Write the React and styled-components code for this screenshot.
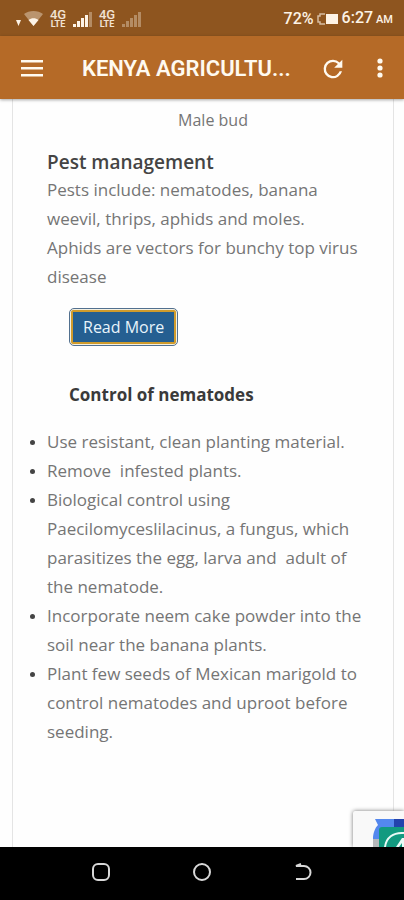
import React from "react";
import styled, { createGlobalStyle } from "styled-components";

const GlobalStyle = createGlobalStyle`
  * {
    box-sizing: border-box;
  }
  body {
    margin: 0;
    background: #fefefe;
    font-family: "Open Sans", "Noto Sans", sans-serif;
  }
`;

const Screen = styled.div`
  display: flex;
  flex-direction: column;
  min-height: 100vh;
`;

const StatusBar = styled.div`
  display: flex;
  align-items: center;
  justify-content: space-between;
  height: 36px;
  padding: 2px 11px 0 15px;
  background: #8e551f;
  color: #fdf3e6;
  font-family: Roboto, sans-serif;
`;

const StatusGroup = styled.div`
  display: flex;
  align-items: center;
  gap: ${(props) => props.$gap};
`;

const NetworkType = styled.span`
  display: flex;
  flex-direction: column;
  align-items: center;
  width: 18px;
  font-size: 13px;
  line-height: 11px;
  font-weight: 500;
  opacity: 0.9;
`;

const NetworkSub = styled.span`
  font-size: 9px;
  line-height: 9px;
  font-weight: 700;
`;

const StatusText = styled.span`
  font-size: ${(props) => (props.$small ? "11px" : "16px")};
  font-weight: 500;
  line-height: 20px;
`;

const Clock = styled.span`
  display: flex;
  align-items: baseline;
  gap: 3px;
`;

const AppBar = styled.header`
  display: flex;
  align-items: center;
  height: 63px;
  padding: 2px 12px 0 20px;
  background: #b56a27;
  color: #fffaf0;
  box-shadow: 0 1px 3px rgba(0, 0, 0, 0.35);
  z-index: 1;
`;

const AppActions = styled.div`
  display: flex;
  gap: 23px;
`;

const IconButton = styled.button`
  display: flex;
  align-items: center;
  justify-content: center;
  flex: none;
  width: 24px;
  height: 32px;
  padding: 0;
  border: none;
  background: none;
  color: inherit;

  svg {
    flex: none;
  }
`;

const AppTitle = styled.h1`
  flex: 1;
  min-width: 0;
  margin: 0 24px 0 38px;
  overflow: hidden;
  white-space: nowrap;
  text-overflow: ellipsis;
  font-family: Roboto, sans-serif;
  font-size: 22px;
  line-height: 34px;
  font-weight: 600;
`;

const Content = styled.main`
  display: flex;
  flex: 1;
  position: relative;
  padding: 0 10px 0 12px;
  overflow: hidden;
`;

const Article = styled.article`
  flex: 1;
  padding: 7px 30px 0 34px;
  border: solid #e4e4e4;
  border-width: 0 1px;
  color: #757575;
  font-size: 17px;
  line-height: 29px;
`;

const Caption = styled.p`
  margin: 0 0 15px;
  padding-left: 16px;
  font-size: 16px;
  text-align: center;
`;

const Heading = styled.h2`
  margin: 0;
  color: #444;
  font-size: 19px;
  line-height: 25px;
  font-weight: 600;
`;

const Paragraph = styled.p`
  margin: 0;
`;

const Indented = styled.div`
  padding-left: 22px;
`;

const ReadMore = styled.a`
  display: block;
  width: fit-content;
  margin: 17px 0 34px;
  padding: 1px;
  border: 1px solid #52708f;
  border-radius: 5px;
  background: #f4f1e4;
  color: #e8f4fb;
  font-size: 16px;
  text-decoration: none;
`;

const ReadMoreLabel = styled.span`
  display: block;
  padding: 2px 10px;
  border: 2px solid #d09b2c;
  border-radius: 2px;
  background: #255f91;
  line-height: 26px;
`;

const SubHeading = styled.h3`
  margin: 0;
  color: #3a3a3a;
  font-size: 17px;
  line-height: 29px;
  font-weight: 700;
`;

const List = styled.ul`
  margin: 18px 0 0;
  padding: 0;
`;

const Item = styled.li`
  &::marker {
    color: #444;
    font-size: 14px;
  }
`;

const Badge = styled.div`
  position: absolute;
  right: 0;
  bottom: 0;
  width: 51px;
  height: 36px;
  background: #f9f9f9;
  box-shadow: 0 0 4px #777;
  border-radius: 2px 0 0 0;
`;

const NavBar = styled.nav`
  display: flex;
  justify-content: center;
  gap: 77px;
  height: 53px;
  padding-top: 9px;
  background: #000;
  color: #d8d8d8;
  z-index: 1;
`;

const controls = [
  "Use resistant, clean planting material.",
  "Remove \u00a0infested plants.",
  "Biological control using Paecilomyceslilacinus, a fungus, which parasitizes the egg, larva and \u00a0adult of the nematode.",
  "Incorporate neem cake powder into the soil near the banana plants.",
  "Plant few seeds of Mexican marigold to control nematodes and uproot before seeding.",
];

const WifiIcon = () => (
  <svg width="28" height="16" viewBox="0 0 28 16" fill="currentColor">
    <path d="M1 9h5l-2.500 6z" />
    <path d="M9 3c5-4 14-4 19 0l-9.500 12z" opacity="0.4" />
    <path d="M13.500 9c3-2.500 7-2.500 10 0l-5 6z" />
  </svg>
);

const SignalIcon = ({ level }) => (
  <svg width="19" height="16" viewBox="0 0 19 16" fill="currentColor">
    {[3, 6, 9, 12, 15].map((height, i) => (
      <rect
        key={height}
        x={i * 4}
        y={16 - height}
        width="3"
        height={height}
        opacity={i < level ? 1 : 0.35}
      />
    ))}
  </svg>
);

const BatteryIcon = () => (
  <svg width="22" height="12" viewBox="0 0 22 12">
    <path
      d="M8 1H3v2H1v6h2v2h5"
      fill="none"
      stroke="currentColor"
      strokeWidth="1.500"
      opacity="0.65"
    />
    <path d="M9 1h12v10H9z" fill="currentColor" />
  </svg>
);

const MenuIcon = () => (
  <svg width="24" height="24" viewBox="0 0 24 24" fill="currentColor">
    <path d="M1 3h22v2.500H1zM1 10h22v2.500H1zM1 17h22v2.500H1z" />
  </svg>
);

const RefreshIcon = () => (
  <svg width="28" height="28" viewBox="0 0 24 24" fill="currentColor">
    <path d="M17.650 6.350A7.960 7.960 0 0 0 12 4a8 8 0 1 0 7.730 10h-2.080A6 6 0 1 1 12 6c1.660 0 3.140.690 4.220 1.780L13 11h7V4z" />
  </svg>
);

const MoreIcon = () => (
  <svg width="8" height="22" viewBox="0 0 8 22" fill="currentColor">
    <circle cx="4" cy="3" r="2.600" />
    <circle cx="4" cy="10" r="2.600" />
    <circle cx="4" cy="17" r="2.600" />
  </svg>
);

const BadgeIcon = () => (
  <svg width="51" height="36" viewBox="0 0 51 36">
    <path d="M20 36V28h8v8z" fill="#b5b8bb" />
    <path d="M20 28c0-6 2-11 5-14l-3-6h19v10l-14 10z" fill="#5488ee" />
    <path d="M41 8h10v10H41z" fill="#2343ad" />
    <path d="M26 36V19q0-3 3-3h22v20z" fill="#129a80" />
    <path
      d="M32 36c1-9 8-15 19-14"
      fill="none"
      stroke="#eafaf6"
      strokeWidth="2"
    />
    <path d="M43 36l6-9h2v9h-2v-4l-3 4z" fill="#eafaf6" />
  </svg>
);

const NavIcon = ({ children }) => (
  <svg
    width="24"
    height="24"
    viewBox="0 0 24 24"
    fill="none"
    stroke="currentColor"
    strokeWidth="2"
  >
    {children}
  </svg>
);

const App = () => (
  <Screen>
    <GlobalStyle />
    <StatusBar>
      <StatusGroup $gap="6px">
        <WifiIcon />
        <NetworkType>
          4G<NetworkSub>LTE</NetworkSub>
        </NetworkType>
        <SignalIcon level={4} />
        <NetworkType>
          4G<NetworkSub>LTE</NetworkSub>
        </NetworkType>
        <SignalIcon level={0} />
      </StatusGroup>
      <StatusGroup $gap="3px">
        <StatusText>72%</StatusText>
        <BatteryIcon />
        <Clock>
          <StatusText>6:27</StatusText>
          <StatusText $small>AM</StatusText>
        </Clock>
      </StatusGroup>
    </StatusBar>
    <AppBar>
      <IconButton aria-label="Menu">
        <MenuIcon />
      </IconButton>
      <AppTitle>KENYA AGRICULTU...</AppTitle>
      <AppActions>
        <IconButton aria-label="Refresh">
          <RefreshIcon />
        </IconButton>
        <IconButton aria-label="More options">
          <MoreIcon />
        </IconButton>
      </AppActions>
    </AppBar>
    <Content>
      <Article>
        <Caption>Male bud</Caption>
        <Heading>Pest management</Heading>
        <Paragraph>
          Pests include: nematodes, banana weevil, thrips, aphids and moles.
          <br />
          Aphids are vectors for bunchy top virus disease
        </Paragraph>
        <Indented>
          <ReadMore href="#more">
            <ReadMoreLabel>Read More</ReadMoreLabel>
          </ReadMore>
          <SubHeading>Control of nematodes</SubHeading>
        </Indented>
        <List>
          {controls.map((text) => (
            <Item key={text}>{text}</Item>
          ))}
        </List>
      </Article>
      <Badge>
        <BadgeIcon />
      </Badge>
    </Content>
    <NavBar>
      <IconButton aria-label="Recent apps">
        <NavIcon>
          <rect x="4" y="4" width="16" height="16" rx="5" />
        </NavIcon>
      </IconButton>
      <IconButton aria-label="Home">
        <NavIcon>
          <circle cx="12" cy="12" r="8" />
        </NavIcon>
      </IconButton>
      <IconButton aria-label="Back">
        <NavIcon>
          <path d="M10 4L5 6h8a6.500 6.500 0 0 1 0 13H5" />
        </NavIcon>
      </IconButton>
    </NavBar>
  </Screen>
);

export default App;
